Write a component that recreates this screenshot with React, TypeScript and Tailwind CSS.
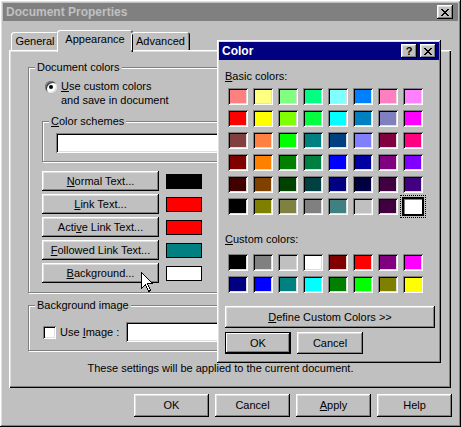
import React from 'react';

// classic 3D bevels
const raised =
  'bg-[#c0c0c0] shadow-[inset_-1px_-1px_#000,inset_1px_1px_#fff,inset_-2px_-2px_#808080,inset_2px_2px_#dfdfdf]';
const sunken =
  'shadow-[inset_1px_1px_#808080,inset_-1px_-1px_#fff,inset_2px_2px_#000,inset_-2px_-2px_#dfdfdf]';
const etched = 'border border-[#808080] shadow-[inset_1px_1px_#fff,1px_1px_#fff]';

const basicColors = [
  ['#ff8080', '#ffff80', '#80ff80', '#00ff80', '#80ffff', '#0080ff', '#ff80c0', '#ff80ff'],
  ['#ff0000', '#ffff00', '#80ff00', '#00ff40', '#00ffff', '#0080c0', '#8080c0', '#ff00ff'],
  ['#804040', '#ff8040', '#00ff00', '#008080', '#004080', '#8080ff', '#800040', '#ff0080'],
  ['#800000', '#ff8000', '#008000', '#008040', '#0000ff', '#0000a0', '#800080', '#8000ff'],
  ['#400000', '#804000', '#004000', '#004040', '#000080', '#000040', '#400040', '#400080'],
  ['#000000', '#808000', '#808040', '#808080', '#408080', '#c0c0c0', '#400040', '#ffffff'],
];

const customColors = [
  ['#000000', '#808080', '#c0c0c0', '#ffffff', '#800000', '#ff0000', '#800080', '#ff00ff'],
  ['#000080', '#0000ff', '#008080', '#00ffff', '#008000', '#00ff00', '#808000', '#ffff00'],
];

const docButtons = [
  { pre: '', key: 'N', post: 'ormal Text...', color: '#000000' },
  { pre: '', key: 'L', post: 'ink Text...', color: '#ff0000' },
  { pre: 'Acti', key: 'v', post: 'e Link Text...', color: '#ff0000' },
  { pre: '', key: 'F', post: 'ollowed Link Text...', color: '#008080' },
  { pre: '', key: 'B', post: 'ackground...', color: '#ffffff' },
];

const Group: React.FC<{ label: React.ReactNode; className?: string; children?: React.ReactNode }> = ({
  label,
  className = '',
  children,
}) => (
  <div className={`relative ${etched} ${className}`}>
    <span className="absolute -top-[7px] left-[6px] px-[2px] bg-[#c0c0c0] leading-[13px]">{label}</span>
    {children}
  </div>
);

const CloseGlyph = () => (
  <svg width="8" height="7" viewBox="0 0 8 7" shapeRendering="crispEdges">
    <path d="M0 0h2v1h1v1h2V1h1V0h2v1H7v1H6v1H5v1h1v1h1v1h1v1H6V6H5V5H3v1H2v1H0V6h1V5h1V4h1V3H2V2H1V1H0z" fill="#000" />
  </svg>
);

const TitleButton: React.FC<{ children: React.ReactNode }> = ({ children }) => (
  <div className={`w-[16px] h-[14px] flex items-center justify-center ${raised}`}>{children}</div>
);

const Swatch: React.FC<{ color: string; selected?: boolean }> = ({ color, selected }) => (
  <div
    className={
      selected
        ? 'w-[20px] h-[17px] outline-1 outline-dotted outline-black outline-offset-[2px] shadow-[0_0_0_1px_#000,inset_1px_1px_#000,inset_-1px_-1px_#000,inset_2px_2px_#808080]'
        : `w-[20px] h-[17px] ${sunken}`
    }
    style={{ backgroundColor: color }}
  />
);

const Cursor = () => (
  <svg width="12" height="20" viewBox="0 0 12 20" shapeRendering="crispEdges">
    <path d="M0.5 0.5V16.5L4.5 12.5L7.5 19.5L9.5 18.5L6.5 11.5H11.5Z" fill="#fff" stroke="#000" strokeWidth="1" />
  </svg>
);

const ColorDialog = () => (
  <div className={`absolute left-[217px] top-[40px] w-[224px] h-[323px] p-[2px] ${raised}`}>
    <div className="h-[18px] bg-[#000080] flex items-center justify-between pl-[3px] pr-[3px]">
      <span className="font-bold text-[12px] text-white">Color</span>
      <div className="flex gap-[3px]">
        <TitleButton>
          <span className="font-bold text-[11px] leading-none">?</span>
        </TitleButton>
        <TitleButton>
          <CloseGlyph />
        </TitleButton>
      </div>
    </div>
    <div className="flex flex-col pl-[6px]">
      <div className="mt-[10px] leading-[13px]">
        <u>B</u>asic colors:
      </div>
      <div className="mt-[5px] ml-[3px] grid grid-cols-[repeat(8,20px)] gap-x-[5px] gap-y-[5px]">
        {basicColors.flatMap((row, r) =>
          row.map((c, i) => <Swatch key={`b${r}-${i}`} color={c} selected={r === 5 && i === 7} />)
        )}
      </div>
      <div className="mt-[18px] leading-[13px]">
        <u>C</u>ustom colors:
      </div>
      <div className="mt-[8px] ml-[3px] grid grid-cols-[repeat(8,20px)] gap-x-[5px] gap-y-[5px]">
        {customColors.flatMap((row, r) => row.map((c, i) => <Swatch key={`c${r}-${i}`} color={c} />))}
      </div>
      <div className={`mt-[13px] w-[210px] h-[22px] flex items-center justify-center ${raised}`}>
        <span>
          <u>D</u>efine Custom Colors &gt;&gt;
        </span>
      </div>
      <div className="mt-[4px] flex gap-[6px]">
        <div className="w-[66px] h-[22px] flex items-center justify-center bg-[#c0c0c0] shadow-[inset_-1px_-1px_#000,inset_1px_1px_#000,inset_-2px_-2px_#000,inset_2px_2px_#fff,inset_-3px_-3px_#808080]">
          OK
        </div>
        <div className={`w-[66px] h-[22px] flex items-center justify-center ${raised}`}>Cancel</div>
      </div>
    </div>
  </div>
);

const App: React.FC = () => {
  return (
    <div className="w-[461px] h-[427px] overflow-hidden bg-[#c0c0c0]">
      <div
        className={`relative w-[461px] h-[427px] p-[3px] flex flex-col text-[11px] text-black font-['Liberation_Sans',Arial,sans-serif] ${raised}`}
      >
        {/* title bar (inactive) */}
        <div className="h-[18px] shrink-0 bg-[#808080] flex items-center justify-between pl-[3px] pr-[5px]">
          <span className="font-bold text-[12px] text-[#c0c0c0]">Document Properties</span>
          <TitleButton>
            <CloseGlyph />
          </TitleButton>
        </div>

        {/* tabs */}
        <div className="mt-[9px] ml-[8px] h-[20px] flex items-end relative z-10">
          <div className="w-[48px] h-[18px] rounded-t-[3px] flex items-center justify-center shadow-[inset_1px_1px_#fff,inset_-1px_0_#000,inset_-2px_0_#808080]">
            General
          </div>
          <div className="-mx-[2px] w-[76px] h-[22px] -mb-[2px] pb-[4px] rounded-t-[3px] bg-[#c0c0c0] flex items-center justify-center shadow-[inset_1px_1px_#fff,inset_-1px_0_#000,inset_-2px_0_#808080]">
            Appearance
          </div>
          <div className="w-[59px] h-[18px] rounded-t-[3px] flex items-center justify-center shadow-[inset_1px_1px_#fff,inset_-1px_0_#000,inset_-2px_0_#808080]">
            Advanced
          </div>
        </div>

        {/* tab panel */}
        <div className="ml-[6px] w-[442px] h-[338px] shrink-0 flex flex-col pl-[19px] pt-[17px] shadow-[inset_1px_1px_#fff,inset_-1px_-1px_#000,inset_-2px_-2px_#808080,inset_2px_2px_#dfdfdf]">
          <Group label="Document colors" className="w-[404px] h-[226px] shrink-0 flex flex-col pl-[13px]">
            <div className="mt-[11px] ml-[3px] flex items-start">
              <div className="mt-[2px] w-[12px] h-[12px] rounded-full bg-white shadow-[inset_1px_1px_#808080,inset_-1px_-1px_#dfdfdf,inset_2px_2px_#404040] flex items-center justify-center">
                <div className="w-[4px] h-[4px] rounded-full bg-black" />
              </div>
              <div className="ml-[4px] leading-[14px]">
                <div>
                  <u>U</u>se custom colors
                </div>
                <div>and save in document</div>
              </div>
              <div className="ml-[75px] mt-[2px] w-[12px] h-[12px] rounded-full bg-white shadow-[inset_1px_1px_#808080,inset_-1px_-1px_#dfdfdf,inset_2px_2px_#404040] flex items-center justify-center">
                <div className="w-[4px] h-[4px] rounded-full bg-black" />
              </div>
            </div>

            <Group
              label={
                <>
                  <u>C</u>olor schemes
                </>
              }
              className="mt-[14px] w-[378px] h-[41px] shrink-0 pl-[13px] pt-[11px]"
            >
              <div className={`w-[340px] h-[20px] bg-white ${sunken}`} />
            </Group>

            <div className="mt-[9px] flex flex-col gap-[3px]">
              {docButtons.map((b) => (
                <div key={b.post} className="flex items-start">
                  <div className={`w-[117px] h-[20px] flex items-center justify-center ${raised}`}>
                    <span>
                      {b.pre}
                      <u>{b.key}</u>
                      {b.post}
                    </span>
                  </div>
                  <div
                    className="ml-[7px] mt-[3px] w-[36px] h-[15px] border border-black"
                    style={{ backgroundColor: b.color }}
                  />
                </div>
              ))}
            </div>
          </Group>

          <Group label="Background image" className="mt-[12px] w-[404px] h-[46px] shrink-0 pl-[14px] pt-[16px]">
            <div className="flex items-center h-[20px]">
              <div className={`w-[13px] h-[13px] bg-white ${sunken}`} />
              <span className="ml-[4px] w-[66px]">
                Use <u>I</u>mage :
              </span>
              <div className={`w-[280px] h-[20px] bg-white ${sunken}`} />
            </div>
          </Group>

          <div className="mt-[11px] -ml-[19px] w-full text-center leading-[13px]">
            These settings will be applied to the current document.
          </div>
        </div>

        {/* dialog buttons */}
        <div className="mt-[6px] flex justify-end gap-[6px] pr-[6px]">
          <div className={`w-[75px] h-[23px] flex items-center justify-center ${raised}`}>OK</div>
          <div className={`w-[75px] h-[23px] flex items-center justify-center ${raised}`}>Cancel</div>
          <div className={`w-[75px] h-[23px] flex items-center justify-center ${raised}`}>
            <span>
              <u>A</u>pply
            </span>
          </div>
          <div className={`w-[75px] h-[23px] flex items-center justify-center ${raised}`}>Help</div>
        </div>

        <ColorDialog />

        <div className="absolute left-[141px] top-[272px] z-20">
          <Cursor />
        </div>
      </div>
    </div>
  );
};

export default App;
